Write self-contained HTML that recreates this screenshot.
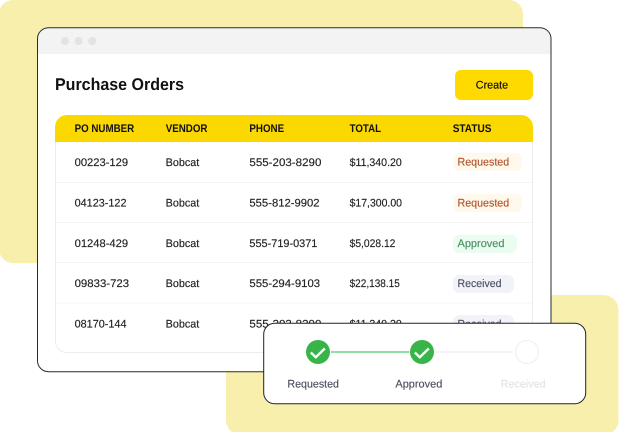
<!DOCTYPE html>
<html lang="en">
<head>
<meta charset="utf-8">
<title>Purchase Orders</title>
<style>
html,body{margin:0;padding:0;background:#fff;width:619px;height:432px;overflow:hidden}
svg{display:block;position:absolute;left:0;top:0}
text{font-family:"Liberation Sans",sans-serif;text-rendering:geometricPrecision}
.h{font-size:11px;font-weight:700;fill:#111}
.c{font-size:11px;fill:#222;stroke:#222;stroke-width:.15}
.b{font-size:11px;stroke-width:.15}
.l{font-size:11px;stroke-width:.15}
</style>
</head>
<body>
<svg width="619" height="432" viewBox="0 0 619 432" xmlns="http://www.w3.org/2000/svg">
  <rect x="-1" y="0" width="524" height="263" rx="14" fill="#F8EFAC"/>
  <rect x="226" y="295" width="392.500" height="140" rx="15" fill="#F8EFAC"/>

  <rect x="37.500" y="27.700" width="513.500" height="344" rx="11" fill="#fff"/>
  <path d="M38 54V38.700a10.500 10.500 0 0 1 10.500-10.500H540a10.500 10.500 0 0 1 10.500 10.500V54Z" fill="#F3F3F3"/>
  <circle cx="65" cy="41" r="4" fill="#E3E3E5"/>
  <circle cx="78.700" cy="41" r="4" fill="#E3E3E5"/>
  <circle cx="92.200" cy="41" r="4" fill="#E3E3E5"/>
  <rect x="37.500" y="27.700" width="513.500" height="344" rx="11" fill="none" stroke="#2b2b2b" stroke-width="1"/>

  <text x="55" y="90" font-size="17" font-weight="700" fill="#111" textLength="129" lengthAdjust="spacingAndGlyphs">Purchase Orders</text>

  <rect x="455" y="70" width="78" height="30" rx="6" fill="#FFDA00"/>
  <text x="475.800" y="88.400" font-size="11" fill="#111" stroke="#111" stroke-width=".2" textLength="32.300" lengthAdjust="spacingAndGlyphs">Create</text>

  <!-- table -->
  <rect x="55.500" y="125" width="477" height="227.500" rx="11" fill="#fff" stroke="#ECECEE"/>
  <path d="M55 142V127a12 12 0 0 1 12-12H521a12 12 0 0 1 12 12V142Z" fill="#FBD800"/>
  <text class="h" x="74.600" y="132" textLength="59.600" lengthAdjust="spacingAndGlyphs">PO NUMBER</text>
  <text class="h" x="165.700" y="132" textLength="41.800" lengthAdjust="spacingAndGlyphs">VENDOR</text>
  <text class="h" x="249.400" y="132" textLength="34.700" lengthAdjust="spacingAndGlyphs">PHONE</text>
  <text class="h" x="349.600" y="132" textLength="31.500" lengthAdjust="spacingAndGlyphs">TOTAL</text>
  <text class="h" x="452.700" y="132" textLength="38.800" lengthAdjust="spacingAndGlyphs">STATUS</text>
  <g stroke="#F5F5F6" stroke-width="1">
    <line x1="56" x2="532" y1="182.500" y2="182.500"/>
    <line x1="56" x2="532" y1="222.500" y2="222.500"/>
    <line x1="56" x2="532" y1="262.500" y2="262.500"/>
    <line x1="56" x2="532" y1="303" y2="303"/>
  </g>

  <text class="c" x="74.600" y="166.200" textLength="53.500" lengthAdjust="spacingAndGlyphs">00223-129</text>
  <text class="c" x="165.600" y="166.200" textLength="33.700" lengthAdjust="spacingAndGlyphs">Bobcat</text>
  <text class="c" x="249.400" y="166.200" textLength="72" lengthAdjust="spacingAndGlyphs">555-203-8290</text>
  <text class="c" x="349.600" y="166.200" textLength="52.200" lengthAdjust="spacingAndGlyphs">$11,340.20</text>
  <rect x="453" y="153" width="69" height="18" rx="6" fill="#FFF8EC"/>
  <text class="b" x="457.500" y="165.300" fill="#B0552C" stroke="#B0552C" textLength="51.700" lengthAdjust="spacingAndGlyphs">Requested</text>

  <text class="c" x="74.600" y="206.700" textLength="51.900" lengthAdjust="spacingAndGlyphs">04123-122</text>
  <text class="c" x="165.600" y="206.700" textLength="33.700" lengthAdjust="spacingAndGlyphs">Bobcat</text>
  <text class="c" x="249.400" y="206.700" textLength="70.200" lengthAdjust="spacingAndGlyphs">555-812-9902</text>
  <text class="c" x="349.600" y="206.700" textLength="52.400" lengthAdjust="spacingAndGlyphs">$17,300.00</text>
  <rect x="453" y="194" width="69" height="18" rx="6" fill="#FFF8EC"/>
  <text class="b" x="457.500" y="206.700" fill="#B0552C" stroke="#B0552C" textLength="51.700" lengthAdjust="spacingAndGlyphs">Requested</text>

  <text class="c" x="74.600" y="246.800" textLength="53.500" lengthAdjust="spacingAndGlyphs">01248-429</text>
  <text class="c" x="165.600" y="246.800" textLength="33.700" lengthAdjust="spacingAndGlyphs">Bobcat</text>
  <text class="c" x="249.400" y="246.800" textLength="68" lengthAdjust="spacingAndGlyphs">555-719-0371</text>
  <text class="c" x="349.600" y="246.800" textLength="45.800" lengthAdjust="spacingAndGlyphs">$5,028.12</text>
  <rect x="453" y="234.500" width="64" height="18.500" rx="6" fill="#EBFCF0"/>
  <text class="b" x="457.500" y="246.800" fill="#4A8F66" stroke="#4A8F66" textLength="47" lengthAdjust="spacingAndGlyphs">Approved</text>

  <text class="c" x="74.600" y="287.200" textLength="54.500" lengthAdjust="spacingAndGlyphs">09833-723</text>
  <text class="c" x="165.600" y="287.200" textLength="33.700" lengthAdjust="spacingAndGlyphs">Bobcat</text>
  <text class="c" x="249.400" y="287.200" textLength="70.700" lengthAdjust="spacingAndGlyphs">555-294-9103</text>
  <text class="c" x="349.600" y="287.200" textLength="50.200" lengthAdjust="spacingAndGlyphs">$22,138.15</text>
  <rect x="453" y="275" width="61" height="18" rx="6" fill="#F2F3F8"/>
  <text class="b" x="457.500" y="287.200" fill="#4B5060" stroke="#4B5060" textLength="44" lengthAdjust="spacingAndGlyphs">Received</text>

  <text class="c" x="74.600" y="327.300" textLength="51.900" lengthAdjust="spacingAndGlyphs">08170-144</text>
  <text class="c" x="165.600" y="327.300" textLength="33.700" lengthAdjust="spacingAndGlyphs">Bobcat</text>
  <text class="c" x="249.400" y="327.300" textLength="72" lengthAdjust="spacingAndGlyphs">555-203-8290</text>
  <text class="c" x="349.600" y="327.300" textLength="52.200" lengthAdjust="spacingAndGlyphs">$11,340.20</text>
  <rect x="453" y="315" width="61" height="18" rx="6" fill="#F2F3F8"/>
  <text class="b" x="457.500" y="327.300" fill="#4B5060" stroke="#4B5060" textLength="44" lengthAdjust="spacingAndGlyphs">Received</text>

  <!-- stepper panel -->
  <rect x="263.700" y="323.300" width="322" height="80.500" rx="11" fill="#fff" stroke="#222" stroke-width="1"/>
  <line x1="331" x2="409.500" y1="352" y2="352" stroke="#6FD08A" stroke-width="1.500"/>
  <line x1="436" x2="513" y1="352" y2="352" stroke="#EFEFF0" stroke-width="1.500"/>
  <circle cx="318" cy="352" r="12" fill="#38B449"/>
  <path d="M310.800 352.500l5 4.700 9-8.700" fill="none" stroke="#fff" stroke-width="2.400"/>
  <circle cx="422" cy="352" r="12" fill="#38B449"/>
  <path d="M414.800 352.500l5 4.700 9-8.700" fill="none" stroke="#fff" stroke-width="2.400"/>
  <circle cx="527" cy="352" r="11.500" fill="#fff" stroke="#EEEEF0" stroke-width="1"/>
  <text class="l" x="287.400" y="387.300" fill="#4B5060" stroke="#4B5060" textLength="51.600" lengthAdjust="spacingAndGlyphs">Requested</text>
  <text class="l" x="395.400" y="387.300" fill="#4B5060" stroke="#4B5060" textLength="46.900" lengthAdjust="spacingAndGlyphs">Approved</text>
  <text class="l" x="500.800" y="387.300" fill="#E2E3E8" stroke="#E2E3E8" textLength="44.800" lengthAdjust="spacingAndGlyphs">Received</text>
</svg>
</body>
</html>
